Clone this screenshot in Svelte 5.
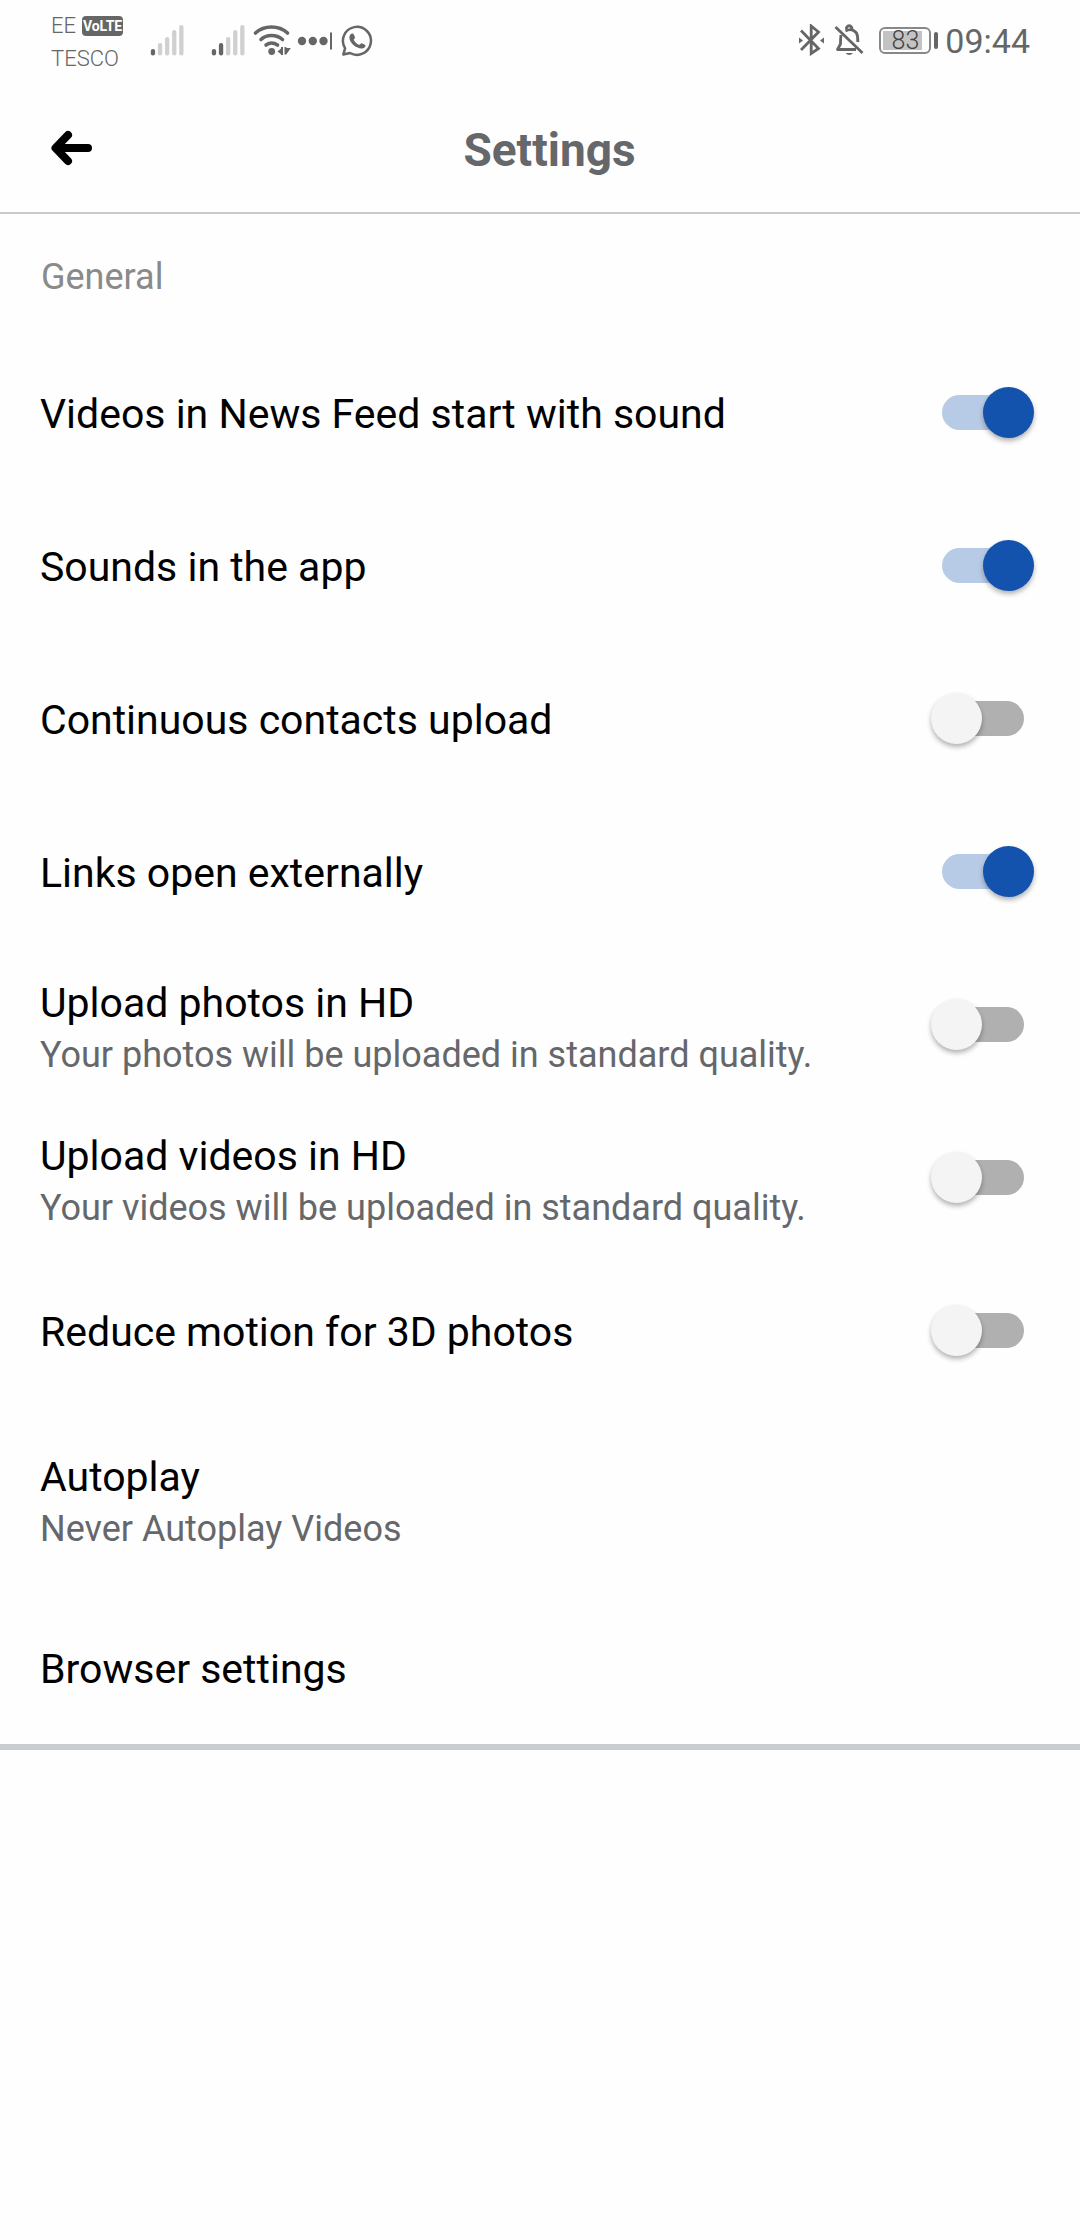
<script>
  let toggles = $state([
    { id: 'feed-sound', title: 'Videos in News Feed start with sound', on: true },
    { id: 'app-sounds', title: 'Sounds in the app', on: true },
    { id: 'contacts', title: 'Continuous contacts upload', on: false },
    { id: 'links', title: 'Links open externally', on: true },
    { id: 'photos-hd', title: 'Upload photos in HD', note: 'Your photos will be uploaded in standard quality.', on: false },
    { id: 'videos-hd', title: 'Upload videos in HD', note: 'Your videos will be uploaded in standard quality.', on: false },
    { id: 'motion', title: 'Reduce motion for 3D photos', on: false }
  ]);
</script>

{#snippet signal(level)}
  <svg class="signal" width="34" height="32" viewBox="0 0 34 32" aria-hidden="true">
    {#each [25, 19, 13, 6, 1] as top, i}
      <rect class:lit={i < level} x={i * 7.1 + 0.8} y={top} width="4.3" height={31.5 - top} rx="2.1" />
    {/each}
  </svg>
{/snippet}

<div class="screen">
  <div class="status">
    <div class="carriers">
      <div class="carrier">EE <span class="volte">VoLTE</span></div>
      <div class="carrier">TESCO</div>
    </div>
    <div class="left-icons">
      {@render signal(1)}
      <span class="second">{@render signal(2)}</span>
      <svg width="38" height="32" viewBox="253 24 38 32" aria-hidden="true">
        <g fill="none" stroke="#666" stroke-width="3.6" stroke-linecap="round">
          <path d="M255.5 33Q262 27 271.5 27T287.5 33" />
          <path d="M261 39.5Q265 35.5 271.5 35.5T282.5 39.5" />
          <path d="M266 45Q271.5 41 277.5 45" />
        </g>
        <circle cx="271.7" cy="51.5" r="3.4" fill="#666" />
        <path d="M277.5 51.5 281 48.5V47h2v8h-2v-.8zM284.5 47h1.8v1l4.5 0-4.5 6.6H284.5z" fill="#666" />
      </svg>
      <svg class="dots" width="36" height="32" viewBox="297 24 36 32" aria-hidden="true">
        <g fill="#666">
          <circle cx="302" cy="41" r="4.2" />
          <circle cx="312.8" cy="41" r="4.2" />
          <circle cx="323.5" cy="41" r="4.2" />
          <rect x="330" y="32.5" width="2" height="17" />
        </g>
      </svg>
      <svg width="34" height="34" viewBox="340 23 34 34" aria-hidden="true">
        <path d="M343.3 54.5 345.1 48.3A14 14 0 1 1 350 53z" fill="none" stroke="#666" stroke-width="2.5" stroke-linejoin="round" />
        <path d="M350.6 34.3c1-1.2 2.7-1.1 3.2.1l1.2 2.8c.4 1-1.6 2.2-1.2 2.9 1.3 2.3 3 3.8 5.2 4.7.9.4 1.9-2 2.9-1.6l3 1.5c1.1.6.3 2.2-.3 2.8-1.6 1.5-4.3 1.3-7.6-.2-3.7-1.7-6.7-5.3-7.4-8.1-.5-2.1 0-3.7 1-4.9z" fill="#666" />
      </svg>
    </div>
    <div class="right-icons">
      <svg width="26" height="32" viewBox="798 24 26 32" aria-hidden="true">
        <path d="M801 30.5 818.5 48.5 811.2 53.5V26L818.5 32 801 50" fill="none" stroke="#666" stroke-width="2.8" />
        <path d="M799 37.5 803 40.5 799 43.5zM824 37.5 820 40.5 824 43.5z" fill="#666" />
      </svg>
      <svg width="30" height="32" viewBox="834 24 30 32" aria-hidden="true">
        <g fill="none" stroke="#666" stroke-width="2.8">
          <path d="M835.5 27 862.5 53" />
          <path d="M841 35Q840.5 38 840.5 44L837.5 49.5H856" stroke-linejoin="round" />
          <path d="M845.5 31Q852 27.5 856.5 33 858 36 857.8 42" />
          <path d="M846.5 29.5V27.5Q849.2 24 851.8 27.5V29" />
        </g>
        <path d="M845.5 53h7.5q-3.7 3.8-7.5 0z" fill="#666" />
      </svg>
      <div class="battery"><span class="charge">83</span></div>
      <time class="clock">09:44</time>
    </div>
  </div>

  <header>
    <button class="back" aria-label="Back">
      <svg width="42" height="36" viewBox="0 0 42 36" aria-hidden="true">
        <path d="M37 18H5M17 5 4.5 18 17 31" fill="none" stroke="#000" stroke-width="8" stroke-linecap="round" stroke-linejoin="round" />
        <path d="M5 18 13 9V27z" />
      </svg>
    </button>
    <h1>Settings</h1>
  </header>

  <main>
    <h2>General</h2>
    {#each toggles as item (item.id)}
      <label class="row" for={item.id}>
        <span class="text">
          <span class="title">{item.title}</span>
          {#if item.note}<span class="note">{item.note}</span>{/if}
        </span>
        <input id={item.id} type="checkbox" role="switch" bind:checked={item.on} />
      </label>
    {/each}
    <button class="row tall">
      <span class="text">
        <span class="title">Autoplay</span>
        <span class="note">Never Autoplay Videos</span>
      </span>
    </button>
    <button class="row"><span class="text"><span class="title">Browser settings</span></span></button>
  </main>
</div>

<style>
  :global(body) {
    background: #fefefe;
  }
  .screen {
    min-height: 100vh;
    background: #fefefe;
    color: #000;
    font-family: Roboto, 'Liberation Sans', sans-serif;
  }
  svg {
    display: block;
    flex: none;
  }
  .status {
    display: flex;
    align-items: center;
    height: 80px;
    padding: 0 50px 0 51px;
    box-sizing: border-box;
    color: #666;
  }
  .carriers {
    width: 99px;
    padding-top: 4px;
    font-size: 22px;
    font-weight: 300;
    line-height: 33px;
  }
  .carrier {
    display: flex;
    align-items: center;
    gap: 6px;
    height: 33px;
  }
  .volte {
    width: 41px;
    border-radius: 4px;
    background: #666;
    color: #fff;
    font-size: 14px;
    font-weight: 700;
    line-height: 20px;
    text-align: center;
  }
  .left-icons,
  .right-icons {
    display: flex;
    align-items: center;
  }
  .signal rect {
    fill: #d0d0d0;
  }
  .signal rect.lit {
    fill: #666;
  }
  .second {
    margin: 0 8px 0 27px;
  }
  .dots {
    margin: 0 7px 0 6px;
  }
  .right-icons {
    margin-left: auto;
    gap: 10px;
  }
  .battery {
    position: relative;
    width: 52px;
    height: 27px;
    margin: 0 4px 0 5px;
    padding: 2px;
    box-sizing: border-box;
    border: 2px solid #888;
    border-radius: 6px;
  }
  .battery::after {
    content: '';
    position: absolute;
    top: 3px;
    right: -9px;
    width: 4px;
    height: 17px;
    border-radius: 2px;
    background: #666;
  }
  .charge {
    display: block;
    width: 39px;
    padding-right: 3px;
    box-sizing: border-box;
    background: #c3c3c3;
    color: #444;
    font-size: 25px;
    font-weight: 300;
    line-height: 19px;
    text-align: right;
  }
  .clock {
    padding-top: 2px;
    font-size: 34px;
    line-height: 40px;
  }
  header {
    display: grid;
    grid-template-columns: 42px 1fr 24px;
    align-items: center;
    height: 134px;
    padding: 4px 50px 0 51px;
    box-sizing: border-box;
    border-bottom: 2px solid #c9cacf;
  }
  button {
    margin: 0;
    padding: 0;
    border: 0;
    background: none;
    color: inherit;
    font: inherit;
    text-align: left;
    cursor: pointer;
  }
  h1 {
    margin: 0;
    padding-top: 4px;
    color: #65676b;
    font-size: 46px;
    font-weight: 700;
    line-height: 54px;
    text-align: center;
  }
  main {
    border-bottom: 6px solid #c9ccd1;
  }
  h2 {
    margin: 0;
    padding: 39px 41px 35px;
    color: #8a8a8a;
    font-size: 36px;
    font-weight: 400;
    line-height: 48px;
  }
  .row {
    display: flex;
    align-items: center;
    justify-content: space-between;
    width: 100%;
    min-height: 153px;
    padding: 0 46px 0 40px;
    box-sizing: border-box;
    cursor: pointer;
  }
  .tall {
    min-height: 184px;
  }
  .text {
    display: flex;
    flex-direction: column;
    gap: 3px;
    padding-top: 2px;
  }
  .title {
    font-size: 41px;
    line-height: 56px;
  }
  .note {
    color: #65676b;
    font-size: 36px;
    line-height: 43px;
  }
  input {
    position: relative;
    flex: none;
    width: 103px;
    height: 51px;
    margin: 0;
    appearance: none;
    cursor: pointer;
  }
  input::before {
    content: '';
    position: absolute;
    inset: 8px 10px 8px 11px;
    border-radius: 18px;
    background: #b0b0b0;
  }
  input::after {
    content: '';
    position: absolute;
    top: 0;
    left: 0;
    width: 51px;
    height: 51px;
    border-radius: 50%;
    background: #f4f4f4;
    box-shadow: 0 3px 5px rgba(0, 0, 0, 0.3);
  }
  input:checked::before {
    background: #b8cbe6;
  }
  input:checked::after {
    left: 52px;
    background: #1453ad;
  }
</style>
